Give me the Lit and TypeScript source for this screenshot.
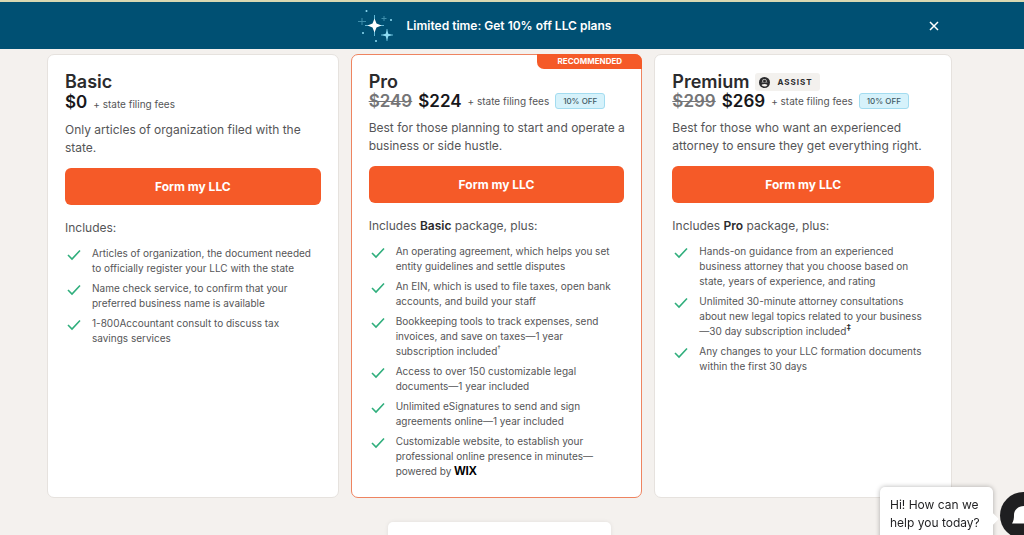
import { LitElement, html, svg, css, nothing, TemplateResult } from "lit";
import { customElement, property } from "lit/decorators.js";
import { classMap } from "lit/directives/class-map.js";

interface Plan {
  name: string;
  price: string;
  oldPrice?: string;
  discount?: string;
  assist?: boolean;
  recommended?: boolean;
  description: string;
  includes: TemplateResult;
  features: TemplateResult[];
}

const plans: Plan[] = [
  {
    name: "Basic",
    price: "$0",
    description: "Only articles of organization filed with the state.",
    includes: html`Includes:`,
    features: [
      html`Articles of organization, the document needed to officially register your LLC with the state`,
      html`Name check service, to confirm that your preferred business name is available`,
      html`1-800Accountant consult to discuss tax savings services`,
    ],
  },
  {
    name: "Pro",
    price: "$224",
    oldPrice: "$249",
    discount: "10% OFF",
    recommended: true,
    description: "Best for those planning to start and operate a business or side hustle.",
    includes: html`Includes <b>Basic</b> package, plus:`,
    features: [
      html`An operating agreement, which helps you set entity guidelines and settle disputes`,
      html`An EIN, which is used to file taxes, open bank accounts, and build your staff`,
      html`Bookkeeping tools to track expenses, send invoices, and save on taxes—1 year subscription included<sup>†</sup>`,
      html`Access to over 150 customizable legal documents—1 year included`,
      html`Unlimited eSignatures to send and sign agreements online—1 year included`,
      html`Customizable website, to establish your professional online presence in minutes—powered by <strong class="wix">WIX</strong>`,
    ],
  },
  {
    name: "Premium",
    price: "$269",
    oldPrice: "$299",
    discount: "10% OFF",
    assist: true,
    description: "Best for those who want an experienced attorney to ensure they get everything right.",
    includes: html`Includes <b>Pro</b> package, plus:`,
    features: [
      html`Hands-on guidance from an experienced business attorney that you choose based on state, years of experience, and rating`,
      html`Unlimited 30-minute attorney consultations about new legal topics related to your business —30 day subscription included<sup class="strong">‡</sup>`,
      html`Any changes to your LLC formation documents within the first 30 days`,
    ],
  },
];

/* Four-pointed star centred on (x, y) with arm length r. */
const star = (x: number, y: number, r: number, w: number) =>
  svg`<path d="M${x} ${y - r}L${x + w} ${y - w}L${x + r} ${y}L${x + w} ${y + w}L${x} ${y + r}L${x - w} ${y + w}L${x - r} ${y}L${x - w} ${y - w}Z"/>`;

@customElement("promo-banner")
export class PromoBanner extends LitElement {
  static styles = css`
    :host {
      display: block;
      background: #005073;
      border-top: 2px solid #d9d8b2;
      color: #fff;
    }
    .bar {
      display: grid;
      grid-template-columns: 1fr auto 1fr;
      align-items: center;
      height: 47px;
      padding: 0 84px 0 28px;
    }
    .message {
      grid-column: 2;
      display: flex;
      align-items: center;
      gap: 14px;
      margin: 0;
      font-size: 12px;
      line-height: 16px;
      font-weight: 600;
    }
    .message svg { display: block; }
    .close {
      justify-self: end;
      display: grid;
      place-items: center;
      width: 12px;
      height: 12px;
      padding: 0;
      border: 0;
      background: none;
      color: inherit;
      cursor: pointer;
    }
  `;

  render() {
    return html`
      <div class="bar">
        <p class="message">
          <svg width="36" height="34" viewBox="0 0 36 34" aria-hidden="true">
            <g fill="none" stroke="#62b8d6" stroke-width="1">
              <path d="M17.500 6v21M8 16.500h19"/>
              <path d="M30 20v12M24 26h12"/>
              <path d="M5 9v7M1 12.500h8M27 7v5M24.500 9.500h5" stroke="#3e8eac"/>
            </g>
            <g fill="#8fdcf3">${star(30, 26, 5, 1.3)}</g>
            <g fill="#fff">${star(17.5, 16.5, 7, 2)}</g>
            <g fill="#8fdcf3">
              <circle cx="9.500" cy="2" r="1"/><circle cx="34" cy="11" r="1"/>
              <circle cx="6" cy="24" r="1"/><circle cx="19" cy="32" r="1"/>
            </g>
          </svg>
          Limited time: Get 10% off LLC plans
        </p>
        <button class="close" aria-label="Close">
          <svg width="10" height="10" viewBox="0 0 10 10">
            <path d="M1 1l8 8M9 1l-8 8" stroke="currentColor" stroke-width="1.5"/>
          </svg>
        </button>
      </div>
    `;
  }
}

@customElement("plan-card")
export class PlanCard extends LitElement {
  @property({ attribute: false }) plan!: Plan;

  static styles = css`
    :host { display: grid; }
    * { box-sizing: border-box; }
    .card {
      position: relative;
      padding: 17px 17px 18px;
      border: 1px solid #e6e2de;
      border-radius: 7px;
      background: #fff;
      color: #555557;
    }
    .card.recommended { border-color: #ee8460; }
    .ribbon {
      position: absolute;
      top: -1px;
      right: -1px;
      width: 105px;
      border-radius: 0 7px 0 7px;
      background: #f55a28;
      color: #fff;
      font-size: 8px;
      line-height: 15px;
      font-weight: 700;
      text-align: center;
    }
    .title {
      display: flex;
      align-items: center;
      gap: 6px;
      height: 20px;
    }
    h2 {
      margin: 0;
      color: #2b2b2d;
      font-size: 18px;
      line-height: 20px;
      font-weight: 600;
    }
    .assist {
      display: flex;
      align-items: center;
      gap: 7px;
      height: 18px;
      padding: 0 7px 0 4px;
      border-radius: 3px;
      background: #f3f1ee;
      color: #2b2b2d;
      font-size: 8px;
      font-weight: 700;
      letter-spacing: 1px;
    }
    .price {
      display: flex;
      align-items: baseline;
      gap: 6px;
      height: 20px;
      line-height: 20px;
      white-space: nowrap;
    }
    .price.sale { align-items: center; height: 18px; }
    .amount, .old { font-size: 17px; font-weight: 600; }
    .amount { color: #17171a; }
    .old { color: #757577; }
    .fees { font-size: 10px; }
    .off {
      width: 50px;
      border: 1px solid #a3dcf0;
      border-radius: 3px;
      background: #d6f2fb;
      color: #3f5964;
      font-size: 8px;
      line-height: 14px;
      font-weight: 500;
      text-align: center;
    }
    .description {
      margin: 9px -4px 11px 0;
      font-size: 12px;
      line-height: 18px;
    }
    .cta {
      display: block;
      width: 100%;
      height: 37px;
      padding: 0;
      border: 0;
      border-radius: 6px;
      background: #f55a28;
      color: #fff;
      font: inherit;
      font-size: 12px;
      font-weight: 700;
      cursor: pointer;
    }
    .includes {
      margin: 14px 0 9px;
      font-size: 12px;
      line-height: 18px;
    }
    .includes b { color: #2b2b2d; font-weight: 600; }
    ul {
      display: grid;
      gap: 5px;
      margin: 0;
      padding: 0 4px 0 0;
      list-style: none;
      font-size: 10px;
      line-height: 15px;
    }
    li {
      display: grid;
      grid-template-columns: 18px 1fr;
      gap: 9px;
    }
    li svg { display: block; margin-top: 2px; }
    sup { font-size: 7px; line-height: 0; }
    sup.strong { color: #2b2b2d; font-size: 9px; font-weight: 600; }
    .wix {
      color: #000;
      font-family: "Liberation Sans", sans-serif;
      font-size: 12px;
      line-height: 0;
      font-weight: 700;
    }
  `;

  render() {
    const p = this.plan;
    return html`
      <article class=${classMap({ card: true, recommended: !!p.recommended })}>
        ${p.recommended ? html`<span class="ribbon">RECOMMENDED</span>` : nothing}
        <div class="title">
          <h2>${p.name}</h2>
          ${p.assist
            ? html`<span class="assist">
                <svg width="11" height="11" viewBox="0 0 22 22" aria-hidden="true">
                  <circle cx="11" cy="11" r="11" fill="currentColor"/>
                  <path d="M3 11c1 0 3 1 4-1-1-4 1-6 4-6s5 2 4 6c1 2 3 1 4 1" fill="#f3f1ee"/>
                  <circle cx="11" cy="8" r="3" fill="currentColor"/>
                  <path d="M5 16c3-3 9-3 12 0-3 4-9 4-12 0z" fill="#f3f1ee"/>
                </svg>
                ASSIST</span>`
            : nothing}
        </div>
        <div class=${classMap({ price: true, sale: !!p.oldPrice })}>
          ${p.oldPrice ? html`<s class="old">${p.oldPrice}</s>` : nothing}
          <span class="amount">${p.price}</span>
          <span class="fees">+ state filing fees</span>
          ${p.discount ? html`<span class="off">${p.discount}</span>` : nothing}
        </div>
        <p class="description">${p.description}</p>
        <button class="cta">Form my LLC</button>
        <p class="includes">${p.includes}</p>
        <ul>
          ${p.features.map(
            (f) => html`<li>
              <svg width="18" height="14" viewBox="0 0 18 14" aria-hidden="true">
                <path d="M3 7l4 4 8-8.500" fill="none" stroke="#2fae7c" stroke-width="1.600"/>
              </svg>
              <span>${f}</span>
            </li>`
          )}
        </ul>
      </article>
    `;
  }
}

@customElement("chat-prompt")
export class ChatPrompt extends LitElement {
  static styles = css`
    :host {
      position: fixed;
      right: -23px;
      bottom: -9px;
      display: flex;
      align-items: center;
      gap: 7px;
    }
    .bubble {
      position: relative;
      box-sizing: border-box;
      width: 113px;
      margin: 0;
      padding: 9px 6px 12px 10px;
      border-radius: 5px;
      background: #fff;
      box-shadow: 0 0 5px rgba(0, 0, 0, 0.3);
      color: #1f1f21;
      font-size: 12px;
      line-height: 18px;
    }
    .bubble::after {
      content: "";
      position: absolute;
      right: -4px;
      top: 28px;
      width: 8px;
      height: 8px;
      background: #fff;
      transform: rotate(45deg);
    }
    button {
      display: grid;
      place-items: center;
      width: 47px;
      height: 47px;
      padding: 0;
      border: 0;
      border-radius: 50%;
      background: #1f1f21;
      cursor: pointer;
    }
  `;

  render() {
    return html`
      <p class="bubble">Hi! How can we help you today?</p>
      <button aria-label="Open chat">
        <svg width="24" height="22" viewBox="0 0 24 22">
          <path d="M12 1C6 1 2 5 2 10c0 3-.3 6-2 8.500h12c6 0 10-4 10-9S18 1 12 1z" fill="#fff"/>
        </svg>
      </button>
    `;
  }
}

@customElement("app-root")
export class AppRoot extends LitElement {
  static styles = css`
    :host {
      display: block;
      height: 100vh;
      overflow: hidden;
      background: #f4f1ee;
      font-family: Inter, "Liberation Sans", sans-serif;
    }
    .plans {
      display: grid;
      grid-template-columns: 292fr 292fr 298fr;
      gap: 12px;
      padding: 5px 72px 24px 47px;
    }
    .next {
      width: 223px;
      height: 120px;
      margin: 0 auto;
      border-radius: 5px;
      background: #fff;
      box-shadow: 0 0 4px rgba(0, 0, 0, 0.08);
    }
    .after { padding-right: 25px; }
  `;

  render() {
    return html`
      <promo-banner></promo-banner>
      <main>
        <section class="plans">
          ${plans.map((p) => html`<plan-card .plan=${p}></plan-card>`)}
        </section>
        <div class="after"><div class="next"></div></div>
      </main>
      <chat-prompt></chat-prompt>
    `;
  }
}
